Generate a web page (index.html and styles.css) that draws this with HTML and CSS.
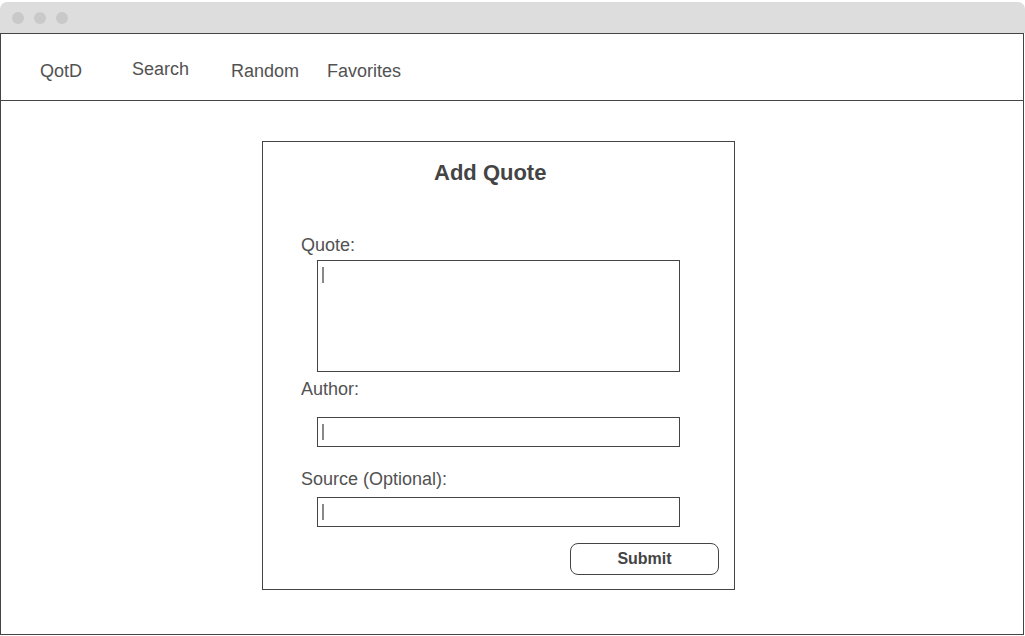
FILE: index.html
```html
<!DOCTYPE html>
<html lang="en">
<head>
<meta charset="utf-8">
<title>Add Quote</title>
<link rel="stylesheet" href="styles.css">
</head>
<body>
<div class="window">
  <div class="titlebar">
    <span class="dot"></span><span class="dot"></span><span class="dot"></span>
  </div>
  <div class="frame">
    <nav class="nav">
      <a class="nav-link qotd">QotD</a>
      <a class="nav-link search">Search</a>
      <a class="nav-link random">Random</a>
      <a class="nav-link favorites">Favorites</a>
    </nav>
    <main class="main">
      <section class="card">
        <h1 class="card-title">Add Quote</h1>
        <label class="field-label label-quote">Quote:</label>
        <div class="box textarea"><span class="caret"></span></div>
        <label class="field-label label-author">Author:</label>
        <div class="box input input-author"><span class="caret"></span></div>
        <label class="field-label label-source">Source (Optional):</label>
        <div class="box input input-source"><span class="caret"></span></div>
        <div class="actions">
          <button class="submit">Submit</button>
        </div>
      </section>
    </main>
  </div>
</div>
</body>
</html>
```

FILE: styles.css
```css
html, body {
  margin: 0;
  padding: 0;
  background: #ffffff;
}

body {
  font-family: "Liberation Sans", Arial, sans-serif;
  color: #525252;
}

.window {
  margin-top: 2px;
  width: 1025px;
}

.titlebar {
  height: 31px;
  background: #dddddd;
  border-radius: 7px 7px 0 0;
  display: flex;
  align-items: center;
  gap: 10px;
  padding-left: 12px;
  box-sizing: border-box;
}

.dot {
  width: 12px;
  height: 12px;
  border-radius: 50%;
  background: #c9c9c9;
}

.frame {
  width: 1024px;
  height: 602px;
  box-sizing: border-box;
  border: 1px solid #444444;
  display: flex;
  flex-direction: column;
}

.nav {
  height: 67px;
  box-sizing: border-box;
  border-bottom: 1px solid #444444;
  display: flex;
  align-items: flex-start;
  padding-top: 27px;
  padding-left: 39px;
  font-size: 18px;
  line-height: 21px;
}

.nav-link {
  color: #525252;
  text-decoration: none;
}

.qotd { width: 92px; }
.search { width: 99px; margin-top: -2px; }
.random { width: 96px; }

.main {
  flex: 1;
  padding-top: 40px;
  padding-left: 261px;
}

.card {
  width: 473px;
  height: 449px;
  box-sizing: border-box;
  border: 1px solid #444444;
  padding-top: 18px;
}

.card-title {
  margin: 0 0 0 171px;
  font-size: 22px;
  line-height: 26px;
  font-weight: bold;
  color: #444444;
}

.field-label {
  display: block;
  margin-left: 38px;
  font-size: 18px;
  line-height: 21px;
}

.label-quote { margin-top: 49px; }
.label-author { margin-top: 7px; }
.label-source { margin-top: 22px; }

.box {
  margin-left: 54px;
  width: 363px;
  box-sizing: border-box;
  border: 1px solid #444444;
  position: relative;
}

.textarea {
  height: 112px;
  margin-top: 4px;
}

.input {
  height: 30px;
}

.input-author { margin-top: 17px; }
.input-source { margin-top: 7px; }

.caret {
  position: absolute;
  left: 4px;
  width: 2px;
  height: 16px;
  background: #888888;
}

.textarea .caret { top: 6px; }
.input .caret { top: 6px; }

.actions {
  margin-top: 16px;
  padding-left: 307px;
}

.submit {
  width: 149px;
  height: 32px;
  box-sizing: border-box;
  border: 1px solid #444444;
  border-radius: 8px;
  background: #ffffff;
  font-family: "Liberation Sans", Arial, sans-serif;
  font-size: 16px;
  font-weight: bold;
  color: #444444;
  padding: 0;
}
```
